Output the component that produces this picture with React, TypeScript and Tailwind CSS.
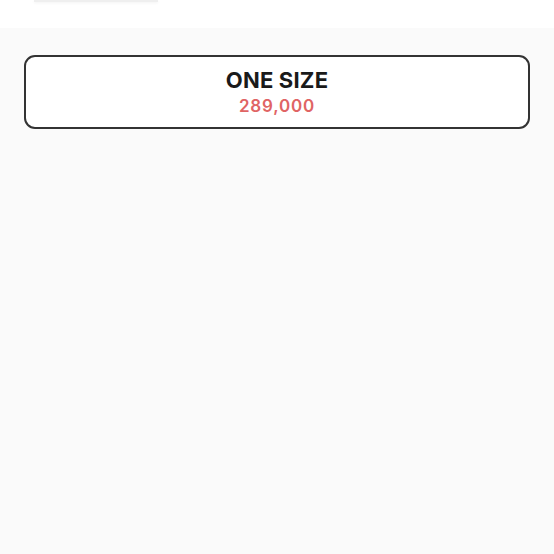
import React from 'react';

const App: React.FC = () => {
  return (
    <div className="w-[554px] h-[554px] bg-[#fafafa] flex flex-col" style={{ fontFamily: 'Inter, "Noto Sans", sans-serif' }}>
      <div className="h-[28px] bg-white shrink-0">
        <div className="ml-[34px] w-[124px] h-[2px] bg-[#efefef] shadow-[0_1px_3px_rgba(0,0,0,0.06)]" />
      </div>
      <div className="px-[24px] pt-[27px]">
        <div className="h-[74px] rounded-[11px] border-2 border-[#333333] bg-white flex flex-col items-center justify-center">
          <div className="text-[22px] leading-[26px] font-bold text-[#1a1a1a] tracking-[0.2px]">ONE SIZE</div>
          <div className="mt-[2px] text-[17px] leading-[22px] font-semibold text-[#e06464] tracking-[0.8px]">289,000</div>
        </div>
      </div>
    </div>
  );
};

export default App;
